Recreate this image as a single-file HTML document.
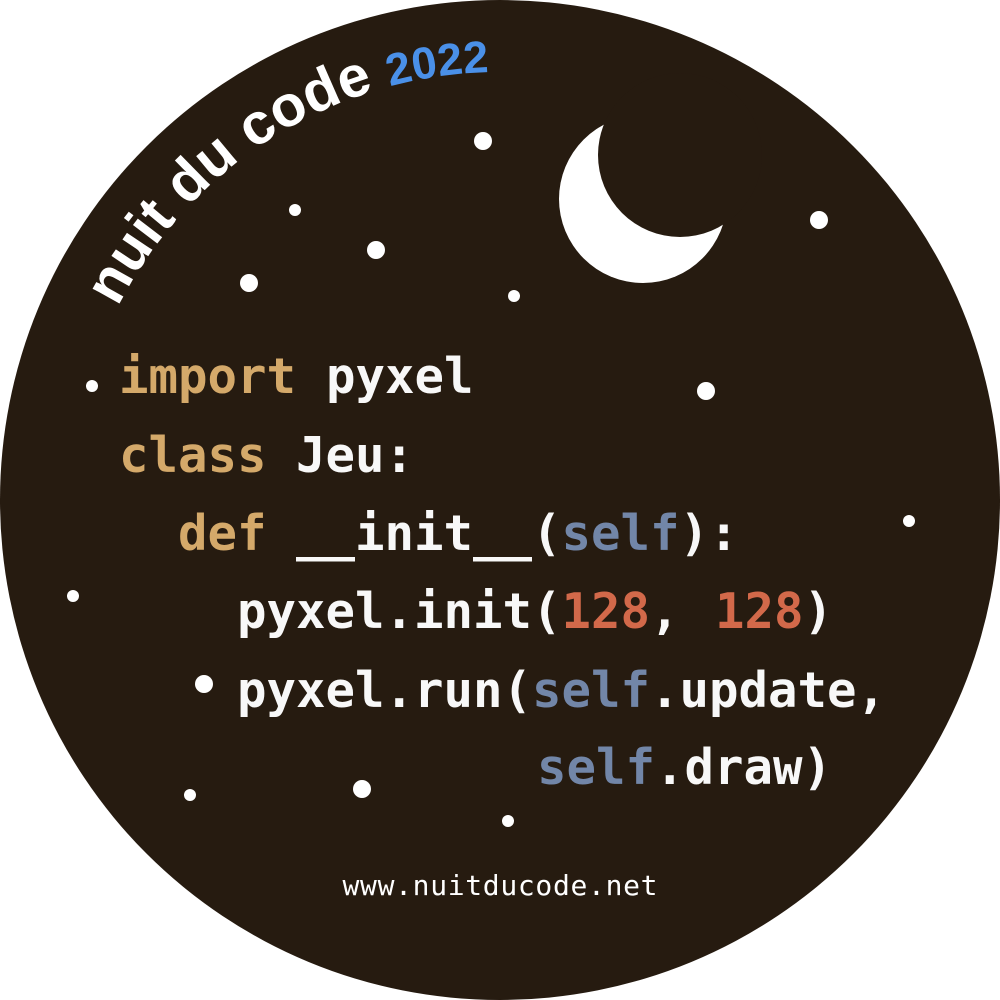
<!DOCTYPE html>
<html><head><meta charset="utf-8"><style>html,body{margin:0;padding:0;background:#fff;}svg{display:block}</style></head>
<body>
<svg width="1000" height="1000" viewBox="0 0 1000 1000" xmlns="http://www.w3.org/2000/svg">
<defs><path id="arc" d="M 72,500 A 428 428 0 0 1 928,500"/></defs>
<circle cx="500" cy="500" r="500" fill="#261b10"/>
<text font-family="Liberation Sans, sans-serif" font-weight="bold" font-size="58" fill="#fff"><textPath href="#arc" startOffset="200">nuit du code<tspan fill="#4a90e8" font-size="45" dx="16">2022</tspan></textPath></text>
<circle cx="643" cy="199" r="84" fill="#fff"/>
<circle cx="680" cy="155" r="82" fill="#261b10"/>
<g fill="#fff">
<circle cx="483" cy="141" r="9"/><circle cx="295" cy="210" r="6"/><circle cx="376" cy="250" r="9"/>
<circle cx="249" cy="283" r="9"/><circle cx="514" cy="296" r="6"/><circle cx="819" cy="220" r="9"/>
<circle cx="92" cy="386" r="6"/><circle cx="706" cy="391" r="9"/><circle cx="909" cy="521" r="6"/>
<circle cx="73" cy="596" r="6"/><circle cx="204" cy="684" r="9"/><circle cx="190" cy="795" r="6"/>
<circle cx="362" cy="789" r="9"/><circle cx="508" cy="821" r="6"/>
</g>
<g font-family="DejaVu Sans Mono, monospace" font-weight="bold" font-size="49" fill="#f8f8f8">
<text x="119" y="393"><tspan fill="#d4a96a">import</tspan><tspan x="326">pyxel</tspan></text>
<text x="119" y="472"><tspan fill="#d4a96a">class</tspan><tspan x="296">Jeu:</tspan></text>
<text x="178" y="550"><tspan fill="#d4a96a">def</tspan><tspan x="296">__init__(</tspan><tspan fill="#7286a8">self</tspan>):</text>
<text x="237" y="628">pyxel.init(<tspan fill="#d2694a">128</tspan>,<tspan x="715" fill="#d2694a">128</tspan>)</text>
<text x="237" y="707">pyxel.run(<tspan fill="#7286a8">self</tspan>.update,</text>
<text x="537" y="784"><tspan fill="#7286a8">self</tspan>.draw)</text>
</g>
<text x="500" y="895" text-anchor="middle" font-family="DejaVu Sans Mono, monospace" font-size="28" fill="#fff" textLength="315" lengthAdjust="spacing">www.nuitducode.net</text>
</svg>
</body></html>
